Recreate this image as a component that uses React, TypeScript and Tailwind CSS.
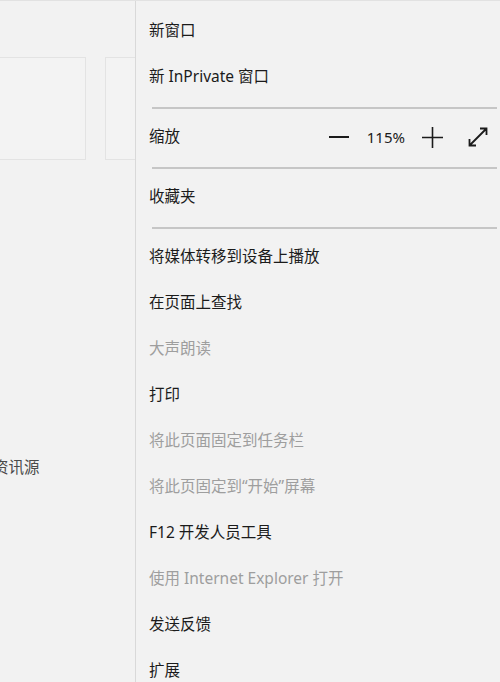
import type { ReactNode } from 'react';

const FONT = { fontFamily: '"Noto Sans", "Noto Sans CJK SC", sans-serif' };

function MenuItem({ children, disabled }: { children: ReactNode; disabled?: boolean }) {
  return (
    <div
      className={`flex h-[46px] items-center pl-[13px] text-[15.5px] leading-none ${
        disabled ? 'text-[#9e9e9e]' : 'text-[#1b1b1b]'
      }`}
    >
      {children}
    </div>
  );
}

function Divider() {
  return (
    <div className="h-[14px] pt-[7px] pl-[16px] pr-[3px]">
      <div className="h-[2px] bg-[#c6c6c6]" />
    </div>
  );
}

function ZoomControls() {
  return (
    <div className="ml-auto mr-[11px] flex items-center">
      <span className="h-[2px] w-[20px] bg-[#1b1b1b]" />
      <span className="ml-[18px] text-[15px] text-[#1b1b1b]">115%</span>
      <svg className="ml-[17px]" width="21" height="21" viewBox="0 0 21 21">
        <path d="M0 10.5H21M10.5 0V21" stroke="#1b1b1b" strokeWidth="1.6" fill="none" />
      </svg>
      <svg className="ml-[24px]" width="22" height="22" viewBox="0 0 22 22">
        <path
          d="M2.5 19.5L19.5 2.5M13 2.5H19.5V9M2.5 13V19.5H9"
          stroke="#1b1b1b"
          strokeWidth="1.8"
          fill="none"
        />
      </svg>
    </div>
  );
}

export default function App() {
  return (
    <div
      className="flex h-[682px] w-[500px] overflow-hidden border-t border-[#e2e2e2] bg-[#f2f2f2]"
      style={FONT}
    >
      {/* page behind the menu */}
      <div className="w-[135px] shrink-0 overflow-hidden">
        <div className="mt-[56px] flex">
          <div className="h-[103px] w-[86px] shrink-0 border-y border-r border-[#e3e3e3] bg-[#f3f3f3]" />
          <div className="ml-[19px] h-[103px] w-[40px] shrink-0 border border-[#e3e3e3] bg-[#f3f3f3]" />
        </div>
        <div className="-ml-[7px] mt-[300px] whitespace-nowrap text-[15.5px] leading-none text-[#4a4a4a]">
          资讯源
        </div>
      </div>

      {/* settings menu */}
      <div className="flex-1 border-l border-[#d9d9d9] pt-[7px]">
        <MenuItem>新窗口</MenuItem>
        <MenuItem>新 InPrivate 窗口</MenuItem>
        <Divider />
        <MenuItem>
          缩放
          <ZoomControls />
        </MenuItem>
        <Divider />
        <MenuItem>收藏夹</MenuItem>
        <Divider />
        <MenuItem>将媒体转移到设备上播放</MenuItem>
        <MenuItem>在页面上查找</MenuItem>
        <MenuItem disabled>大声朗读</MenuItem>
        <MenuItem>打印</MenuItem>
        <MenuItem disabled>将此页面固定到任务栏</MenuItem>
        <MenuItem disabled>将此页固定到“开始”屏幕</MenuItem>
        <MenuItem>F12 开发人员工具</MenuItem>
        <MenuItem disabled>使用 Internet Explorer 打开</MenuItem>
        <MenuItem>发送反馈</MenuItem>
        <MenuItem>扩展</MenuItem>
      </div>
    </div>
  );
}
